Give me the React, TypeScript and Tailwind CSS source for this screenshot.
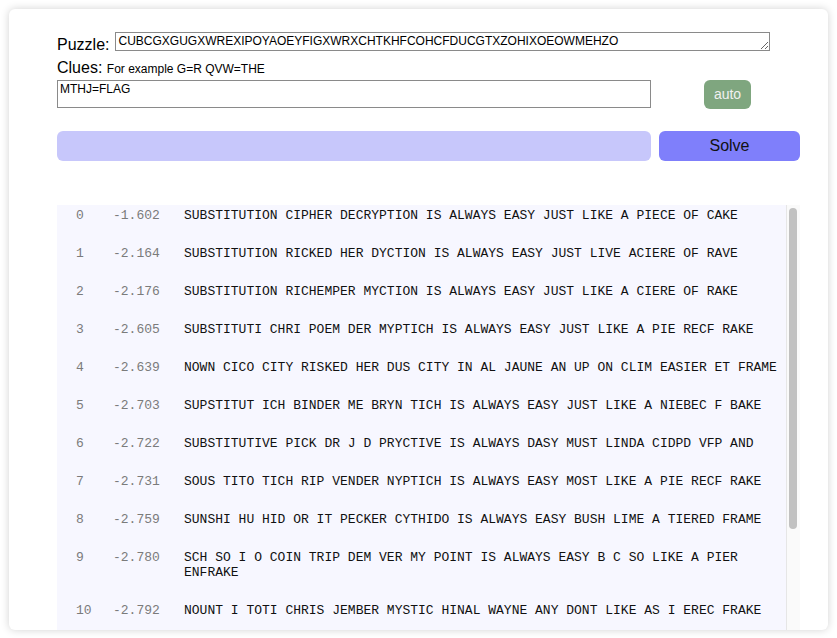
import React from "react";

const results: { score: string; text: string }[] = [
  { score: "-1.602", text: "SUBSTITUTION CIPHER DECRYPTION IS ALWAYS EASY JUST LIKE A PIECE OF CAKE" },
  { score: "-2.164", text: "SUBSTITUTION RICKED HER DYCTION IS ALWAYS EASY JUST LIVE ACIERE OF RAVE" },
  { score: "-2.176", text: "SUBSTITUTION RICHEMPER MYCTION IS ALWAYS EASY JUST LIKE A CIERE OF RAKE" },
  { score: "-2.605", text: "SUBSTITUTI CHRI POEM DER MYPTICH IS ALWAYS EASY JUST LIKE A PIE RECF RAKE" },
  { score: "-2.639", text: "NOWN CICO CITY RISKED HER DUS CITY IN AL JAUNE AN UP ON CLIM EASIER ET FRAME" },
  { score: "-2.703", text: "SUPSTITUT ICH BINDER ME BRYN TICH IS ALWAYS EASY JUST LIKE A NIEBEC F BAKE" },
  { score: "-2.722", text: "SUBSTITUTIVE PICK DR J D PRYCTIVE IS ALWAYS DASY MUST LINDA CIDPD VFP AND" },
  { score: "-2.731", text: "SOUS TITO TICH RIP VENDER NYPTICH IS ALWAYS EASY MOST LIKE A PIE RECF RAKE" },
  { score: "-2.759", text: "SUNSHI HU HID OR IT PECKER CYTHIDO IS ALWAYS EASY BUSH LIME A TIERED FRAME" },
  { score: "-2.780", text: "SCH SO I O COIN TRIP DEM VER MY POINT IS ALWAYS EASY B C SO LIKE A PIER ENFRAKE" },
  { score: "-2.792", text: "NOUNT I TOTI CHRIS JEMBER MYSTIC HINAL WAYNE ANY DONT LIKE AS I EREC FRAKE" },
];

const ResultRow = ({ index, score, text }: { index: number; score: string; text: string }) => {
  return (
    <div className="flex pl-[19px] pt-[3px] pb-[20px] text-[13px] leading-[15px] font-['Liberation_Mono',monospace]">
      <div className="w-[37px] shrink-0 text-[#7b7b7b]">{index}</div>
      <div className="w-[71px] shrink-0 text-[#7b7b7b]">{score}</div>
      <div className="flex-1 text-[#111]">{text}</div>
    </div>
  );
};

export default function App() {
  return (
    <div className="w-[837px] h-[638px] bg-white pt-[9px] pl-[9px] font-['Liberation_Sans',Arial,sans-serif] text-black">
      <div className="w-[819px] h-[621px] flex flex-col overflow-hidden rounded-[6px] bg-white shadow-[0_0_8px_rgba(0,0,0,0.18)] pl-[48px] pr-[28px] pt-[23px]">
        {/* puzzle */}
        <div className="flex items-end gap-[6px]">
          <span className="text-[16px] leading-[13px]">Puzzle:</span>
          <textarea
            rows={1}
            defaultValue="CUBCGXGUGXWREXIPOYAOEYFIGXWRXCHTKHFCOHCFDUCGTXZOHIXOEOWMEHZO"
            className="w-[655px] h-[19px] border border-[#8a8a8a] px-[2px] pt-[1px] text-[12px] leading-[15px] overflow-hidden"
          />
        </div>

        {/* clues */}
        <div className="mt-[8px] leading-[18px]">
          <span className="text-[16px]">Clues:</span> <span className="text-[12px]">For example G=R QVW=THE</span>
        </div>
        <div className="mt-[2px] flex items-start gap-[53px]">
          <textarea
            defaultValue="MTHJ=FLAG"
            className="w-[594px] h-[28px] resize-none border border-[#8a8a8a] px-[2px] pt-[1px] text-[12px] leading-[15px] overflow-hidden"
          />
          <button className="w-[47px] h-[29px] rounded-[6px] bg-[#7fa67f] text-[14px] text-[#f0f0f0]">auto</button>
        </div>

        {/* progress + solve */}
        <div className="mt-[22px] flex gap-[8px]">
          <div className="w-[594px] h-[30px] rounded-[6px] bg-[#c7c7fb]"></div>
          <button className="w-[141px] h-[30px] rounded-[6px] bg-[#7f7ffb] text-[16px] text-[#111]">Solve</button>
        </div>

        {/* results */}
        <div className="mt-[44px] flex-1 min-h-0 flex bg-[#f7f7ff] overflow-hidden">
          <div className="flex-1">
            {results.map((r, i) => (
              <ResultRow key={i} index={i} score={r.score} text={r.text} />
            ))}
          </div>
          <div className="w-[14px] shrink-0 border-l border-[#e6e6e6] bg-[#fafafa] pt-[3px] pl-[2px]">
            <div className="w-[8px] h-[321px] rounded-full bg-[#c1c1c1]"></div>
          </div>
        </div>
      </div>
    </div>
  );
}
